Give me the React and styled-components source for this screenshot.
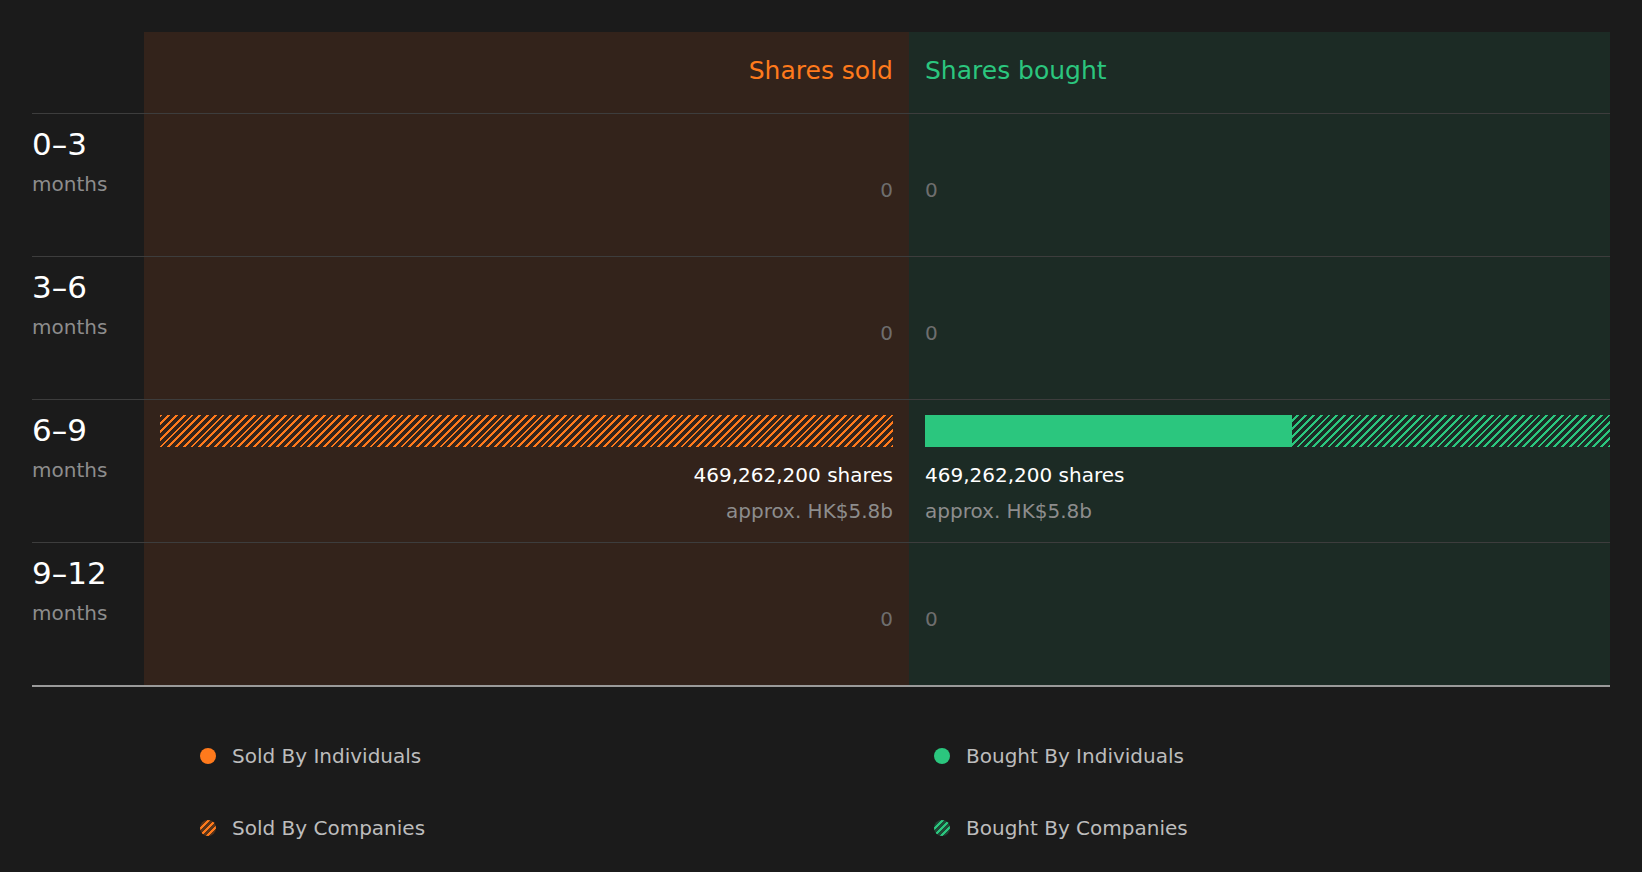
import styled, { createGlobalStyle } from "styled-components";

const Global = createGlobalStyle`
  body { margin: 0; background: #1b1b1b; font-family: "DejaVu Sans", sans-serif; }
`;

const ORANGE = "#ff7a1c";
const GREEN = "#2bc67e";

const Page = styled.div`
  padding: 32px 32px 0 32px;
`;

const Chart = styled.div`
  display: grid;
  grid-template-columns: 112px 765px 1fr;
  border-bottom: 2px solid #9a9a9a;
`;

const Cell = styled.div`
  height: ${p => (p.$head ? 81 : 143)}px;
  border-top: ${p => (p.$head ? "none" : "1px solid #3d3d3d")};
  background: ${p => (p.$side === "sold" ? "#33231b" : p.$side === "bought" ? "#1c2b25" : "transparent")};
  padding: ${p => (p.$side ? "0 16px" : "0")};
  display: flex;
  flex-direction: column;
  align-items: ${p => (p.$side === "sold" ? "flex-end" : "flex-start")};
  text-align: ${p => (p.$side === "sold" ? "right" : "left")};
  box-sizing: border-box;
`;

const HeadText = styled.div`
  color: ${p => p.$color};
  font-size: 25px;
  margin-top: 24px;
`;

const Range = styled.div`
  color: #fff;
  font-size: 31px;
  margin-top: 12px;
`;

const Months = styled.div`
  color: #8d8d8d;
  font-size: 20px;
  margin-top: 10px;
`;

const Zero = styled.div`
  color: #6e6e6e;
  font-size: 20px;
  margin-top: 64px;
`;

const Bars = styled.div`
  display: flex;
  flex-direction: ${p => (p.$reverse ? "row-reverse" : "row")};
  width: ${p => (p.$full ? "calc(100% + 16px)" : "100%")};
  margin-right: ${p => (p.$full ? "-16px" : 0)};
  height: 32px;
  margin-top: 15px;
`;

const Bar = styled.div`
  height: 100%;
  background: ${p =>
    p.$hatch
      ? `repeating-linear-gradient(-45deg, ${p.$color} 0 2px, transparent 2px 5.5px)`
      : p.$color};
`;

const Shares = styled.div`
  color: #fff;
  font-size: 20px;
  margin-top: 16px;
`;

const Approx = styled.div`
  color: #8d8d8d;
  font-size: 20px;
  margin-top: 12px;
`;

const Legend = styled.div`
  display: grid;
  grid-template-columns: 734px 1fr;
  row-gap: 48px;
  padding: 57px 0 0 168px;
`;

const LegendItem = styled.div`
  display: flex;
  align-items: center;
  gap: 16px;
  color: #bdbdbd;
  font-size: 20px;
  height: 24px;
`;

const Dot = styled.span`
  width: 16px;
  height: 16px;
  border-radius: 50%;
  background: ${p =>
    p.$hatch
      ? `repeating-linear-gradient(-45deg, ${p.$color} 0 2.5px, ${p.$dark} 2.5px 5px)`
      : p.$color};
`;

const rows = [
  { range: "0–3", data: null },
  { range: "3–6", data: null },
  { range: "6–9", data: true },
  { range: "9–12", data: null },
];

export default function App() {
  return (
    <Page>
      <Global />
      <Chart>
        <Cell $head />
        <Cell $head $side="sold"><HeadText $color={ORANGE}>Shares sold</HeadText></Cell>
        <Cell $head $side="bought"><HeadText $color={GREEN}>Shares bought</HeadText></Cell>
        {rows.map(r => [
          <Cell key={r.range + "l"}>
            <Range>{r.range}</Range>
            <Months>months</Months>
          </Cell>,
          <Cell key={r.range + "s"} $side="sold">
            {r.data ? (
              <>
                <Bars $reverse>
                  <Bar $hatch $color={ORANGE} style={{ width: "100%" }} />
                </Bars>
                <Shares>469,262,200 shares</Shares>
                <Approx>approx. HK$5.8b</Approx>
              </>
            ) : (
              <Zero>0</Zero>
            )}
          </Cell>,
          <Cell key={r.range + "b"} $side="bought">
            {r.data ? (
              <>
                <Bars $full>
                  <Bar $color={GREEN} style={{ width: "53.6%" }} />
                  <Bar $hatch $color={GREEN} style={{ width: "46.4%" }} />
                </Bars>
                <Shares>469,262,200 shares</Shares>
                <Approx>approx. HK$5.8b</Approx>
              </>
            ) : (
              <Zero>0</Zero>
            )}
          </Cell>,
        ])}
      </Chart>
      <Legend>
        <LegendItem><Dot $color={ORANGE} />Sold By Individuals</LegendItem>
        <LegendItem><Dot $color={GREEN} />Bought By Individuals</LegendItem>
        <LegendItem><Dot $hatch $color={ORANGE} $dark="#5a3419" />Sold By Companies</LegendItem>
        <LegendItem><Dot $hatch $color={GREEN} $dark="#1f4a37" />Bought By Companies</LegendItem>
      </Legend>
    </Page>
  );
}
